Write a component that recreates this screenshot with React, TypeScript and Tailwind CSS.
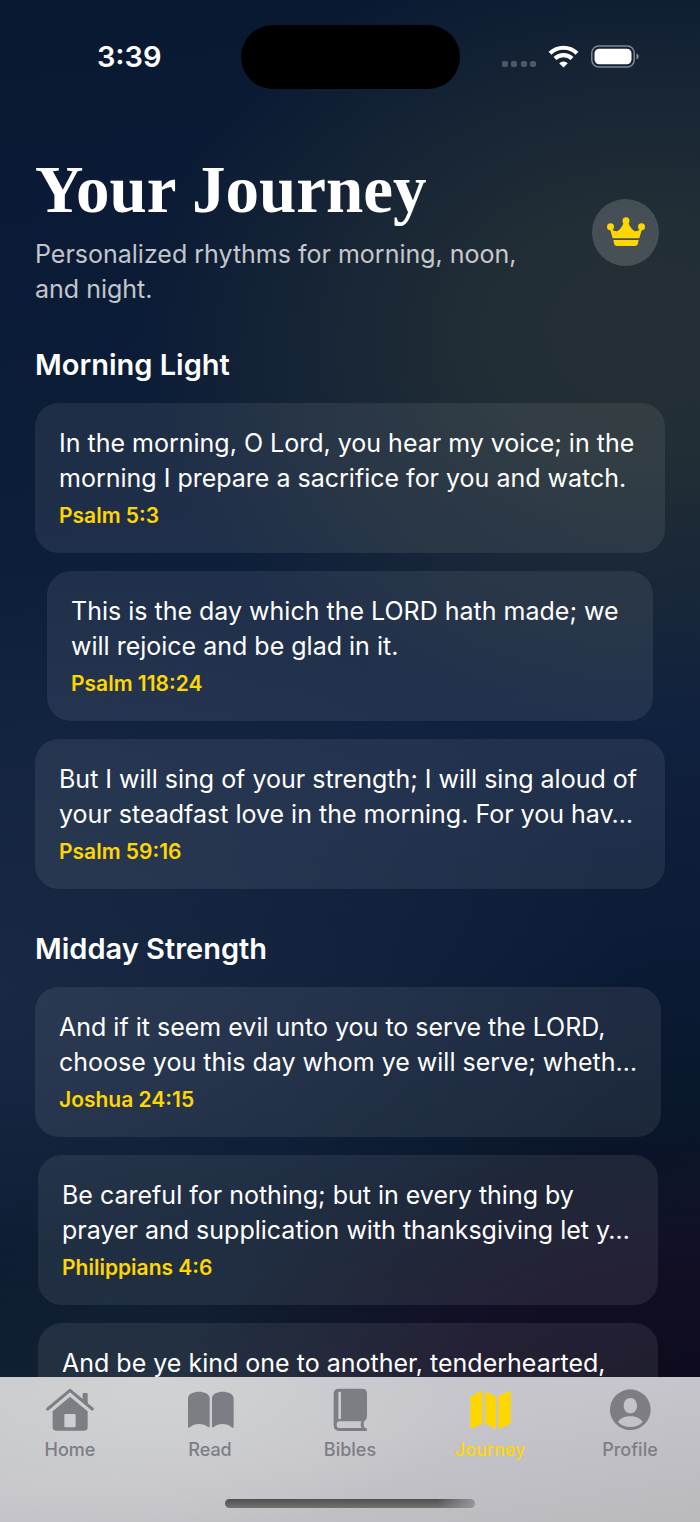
import type { ReactNode } from "react";

type Verse = { text: string; reference: string; inset: string };
type Section = { title: string; verses: Verse[] };

const sections: Section[] = [
  {
    title: "Morning Light",
    verses: [
      {
        text: "In the morning, O Lord, you hear my voice; in the morning I prepare a sacrifice for you and watch.",
        reference: "Psalm 5:3",
        inset: "",
      },
      {
        text: "This is the day which the LORD hath made; we will rejoice and be glad in it.",
        reference: "Psalm 118:24",
        inset: "mx-3",
      },
      {
        text: "But I will sing of your strength; I will sing aloud of your steadfast love in the morning. For you hav…",
        reference: "Psalm 59:16",
        inset: "",
      },
    ],
  },
  {
    title: "Midday Strength",
    verses: [
      {
        text: "And if it seem evil unto you to serve the LORD, choose you this day whom ye will serve; wheth…",
        reference: "Joshua 24:15",
        inset: "mr-1",
      },
      {
        text: "Be careful for nothing; but in every thing by prayer and supplication with thanksgiving let y…",
        reference: "Philippians 4:6",
        inset: "ml-[3px] mr-[7px]",
      },
      {
        text: "And be ye kind one to another, tenderhearted,",
        reference: "Ephesians 4:32",
        inset: "ml-[3px] mr-[7px]",
      },
    ],
  },
];

function StatusBar() {
  return (
    <div className="grid h-[113px] grid-cols-[1fr_219px_1fr] items-center">
      <div className="pl-[18px] text-center text-[29px] font-semibold text-white">3:39</div>
      <div className="h-16 rounded-full bg-black" />
      <div className="flex items-center justify-center pr-[18px]">
        <svg viewBox="0 0 137 24" className="h-6 w-[137px]" aria-hidden="true">
          <g fill="#fff" fillOpacity="0.25">
            <rect x="0" y="16" width="6" height="6" rx="2" />
            <rect x="9" y="16" width="6" height="6" rx="2" />
            <rect x="19" y="16" width="6" height="6" rx="2" />
            <rect x="28" y="16" width="6" height="6" rx="2" />
          </g>
          <g fill="none" stroke="#fff" strokeWidth="4.2">
            <path d="M48 8.200a19.500 19.500 0 0 1 27 0" />
            <path d="M53 13.500a12.300 12.300 0 0 1 17 0" />
          </g>
          <path d="M61.500 22.500l-4.300-4.300a6.300 6.300 0 0 1 8.600 0z" fill="#fff" />
          <rect x="89.800" y="1" width="42.400" height="21" rx="7" fill="none" stroke="#fff" strokeOpacity="0.45" strokeWidth="1.500" />
          <rect x="92.500" y="3.700" width="37" height="15.600" rx="4.800" fill="#fff" />
          <path d="M134.500 8.500c1.300.4 2.200 1.600 2.200 3s-.9 2.600-2.200 3z" fill="#fff" fillOpacity="0.5" />
        </svg>
      </div>
    </div>
  );
}

function CrownIcon() {
  return (
    <svg viewBox="19 23 114 90" className="h-[30px] w-[38px] fill-[#ffd700]" aria-hidden="true">
      <circle cx="29.500" cy="52" r="10.500" />
      <circle cx="76" cy="34" r="10.500" />
      <circle cx="122.500" cy="52" r="10.500" />
      <path d="M27 56C38 64 45 67 51 65c8-4 14-14 19-26h12c5 12 11 22 19 26 6 2 13-1 24-9l-9 31H36z" />
      <path d="M38 92h76l-2 10c-1 6-4 8-9 8H49c-5 0-8-2-9-8z" />
    </svg>
  );
}

function TabIcon({ children }: { children: ReactNode }) {
  return (
    <svg viewBox="0 0 144 144" className="size-12 fill-current" aria-hidden="true">
      {children}
    </svg>
  );
}

const tabs = [
  {
    label: "Home",
    icon: (
      <>
        <path d="M5 69L72 13l67 56" fill="none" stroke="currentColor" strokeWidth="9" strokeLinecap="round" strokeLinejoin="round" />
        <path d="M110 24q0-3 3-3h9q3 0 3 3v33l-15-13z" />
        <path fillRule="evenodd" d="M72 32l53 44v48q0 10-10 10H30q-10 0-10-10V76zM55 87v34q0 3 3 3h28q3 0 3-3V87q0-3-3-3H58q-3 0-3 3z" />
      </>
    ),
  },
  {
    label: "Read",
    icon: (
      <>
        <path d="M6 37C6 23 24 17 39 17s32 6 32 20v84q0 5-5 2c-7-6-16-9-27-9s-19 3-27 10q-6 4-6-2z" />
        <path d="M143 37c0-14-18-20-33-20s-32 6-32 20v84q0 5 5 2c7-6 16-9 27-9s19 3 27 10q6 4 6-2z" />
      </>
    ),
  },
  {
    label: "Bibles",
    icon: (
      <path
        fillRule="evenodd"
        d="M38 8h70q15 0 15 15v68q0 10-7 13c-5 6-4 15 0 22h4q3 0 3 4.500t-3 4.500H40q-17 0-17-17V23Q23 8 38 8zM37 20v77q0 3 4 3t4-3V20q0-3-4-3t-4 3zM41 106q-9 0-9 10t9 10h66c-4-7-4-14 0-20z"
      />
    ),
  },
  {
    label: "Journey",
    icon: (
      <>
        <path d="M49 18v92q0 3-3 5l-27 12q-6 2-6-3V35q0-4 4-6l28-13q4-2 4 2z" />
        <path d="M57 17l29 12q4 2 4 6v91q0 3-4 1l-25-12q-4-2-4-6z" />
        <path d="M97 33q0-3 4-5l28-12q5-2 5 3v90q0 4-4 6l-29 13q-4 2-4-2z" />
      </>
    ),
  },
  {
    label: "Profile",
    icon: (
      <path
        fillRule="evenodd"
        d="M73 10a61 61 0 1 0 0 122 61 61 0 0 0 0-122zM73 36c12 0 20 10 20 23s-9 23-20 23-20-10-20-23 8-23 20-23zM36 108c6-11 21-17 37-17s31 6 37 17c-9 10-22 15-37 15s-28-5-37-15z"
      />
    ),
  },
];

function VerseCard({ text, reference, inset }: Verse) {
  return (
    <li className={inset}>
      <article className="rounded-[24px] bg-white/[0.08] py-[23px] pr-4 pl-6">
        <p className="text-[25px] leading-[35px] text-white">{text}</p>
        <p className="mt-1.5 text-[21px] leading-7 font-semibold text-[#ffd700]">{reference}</p>
      </article>
    </li>
  );
}

export default function App() {
  return (
    <div className="flex h-screen flex-col overflow-hidden bg-[radial-gradient(ellipse_75%_20%_at_100%_93%,#0c0a1b_0%,#120f25_50%,transparent_100%),radial-gradient(ellipse_72%_26%_at_92%_22%,#243035_0%,#222e35_30%,transparent_100%),radial-gradient(ellipse_90%_28%_at_0%_65%,#192944_0%,transparent_100%),linear-gradient(172deg,#0a1932_0%,#0c1d38_28%,#10213f_50%,#0c1b35_65%,#081629_77%,#172636_93%)] font-[Inter,sans-serif]">
      <StatusBar />
      <main className="min-h-0 flex-1 overflow-hidden px-[35px]">
        <header className="flex items-center justify-between pt-11 pr-1.5">
          <div>
            <h1 className="font-['Liberation_Serif',serif] text-[67px] leading-[64px] font-bold text-white">Your Journey</h1>
            <p className="mt-4 max-w-[500px] text-[25px] leading-[35px] text-white/75">
              Personalized rhythms for morning, noon, and night.
            </p>
          </div>
          <button type="button" aria-label="Premium" className="flex size-[67px] items-center justify-center rounded-full bg-white/[0.16]">
            <CrownIcon />
          </button>
        </header>
        <div className="mt-[38px] flex flex-col gap-10">
          {sections.map((section) => (
            <section key={section.title}>
              <h2 className="text-[29px] leading-10 font-semibold text-white">{section.title}</h2>
              <ul className="mt-[18px] flex flex-col gap-[18px]">
                {section.verses.map((verse) => (
                  <VerseCard key={verse.reference} {...verse} />
                ))}
              </ul>
            </section>
          ))}
        </div>
      </main>
      <nav className="flex h-[145px] shrink-0 flex-col bg-[radial-gradient(ellipse_45%_100%_at_22%_10%,#d0d2d3_0%,transparent_100%),linear-gradient(170deg,#c5c8cc_0%,#c6c5cb_45%,#b9b9be_100%)]">
        <ul className="grid grid-cols-5 pt-[9px]">
          {tabs.map((tab) => (
            <li key={tab.label}>
              <a
                href={`#${tab.label.toLowerCase()}`}
                className={
                  tab.label === "Journey"
                    ? "flex flex-col items-center text-[#ffd700]"
                    : "flex flex-col items-center text-[#7d7e84]"
                }
              >
                <TabIcon>{tab.icon}</TabIcon>
                <span className="mt-1 text-lg leading-6 font-medium">{tab.label}</span>
              </a>
            </li>
          ))}
        </ul>
        <div className="mx-auto mt-auto mb-3.5 h-[9px] w-[250px] rounded-full bg-[linear-gradient(90deg,transparent_85%,#96969a_100%),linear-gradient(180deg,#505050,#727272)]" />
      </nav>
    </div>
  );
}
